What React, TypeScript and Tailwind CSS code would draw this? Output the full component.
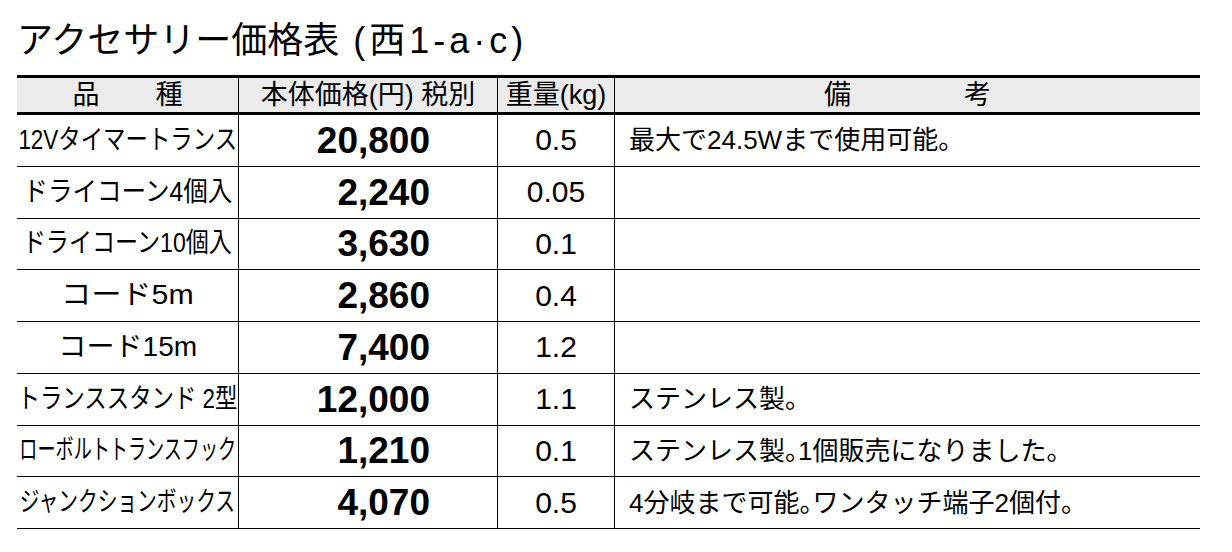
type Item = {
  name: string;
  fit: string;
  price: string;
  weight: string;
  note: string;
};

const items: Item[] = [
  { name: "12Vタイマートランス", fit: "scale-x-[0.83]", price: "20,800", weight: "0.5", note: "最大で24.5Wまで使用可能。" },
  { name: "ドライコーン4個入", fit: "scale-x-[0.91]", price: "2,240", weight: "0.05", note: "" },
  { name: "ドライコーン10個入", fit: "scale-x-[0.855]", price: "3,630", weight: "0.1", note: "" },
  { name: "コード5m", fit: "scale-x-[1.12]", price: "2,860", weight: "0.4", note: "" },
  { name: "コード15m", fit: "scale-x-[1.04]", price: "7,400", weight: "1.2", note: "" },
  { name: "トランススタンド 2型", fit: "scale-x-[0.83]", price: "12,000", weight: "1.1", note: "ステンレス製。" },
  { name: "ローボルトトランスフック", fit: "scale-x-[0.67]", price: "1,210", weight: "0.1", note: "ステンレス製。1個販売になりました。" },
  { name: "ジャンクションボックス", fit: "scale-x-[0.73]", price: "4,070", weight: "0.5", note: "4分岐まで可能。ワンタッチ端子2個付。" },
];

const row = "grid grid-cols-[221px_259px_117px_586px]";

// 句点は半角幅で組む
function Note({ text }: { text: string }) {
  const parts = text.split("。");
  return (
    <>
      {parts.map((p, i) => (
        <span key={i}>
          {p}
          {i < parts.length - 1 && <span className="[font-feature-settings:'halt']">。</span>}
        </span>
      ))}
    </>
  );
}

export default function App() {
  return (
    <div className="w-[1232px] h-[552px] bg-white text-black font-['Liberation_Sans','Noto_Sans_CJK_JP',sans-serif] pl-[17px]">
      {/* タイトル */}
      <div className="h-[75px] pt-[23px] text-[36px] leading-[36px] whitespace-nowrap">
        アクセサリー価格表 <span className="ml-[4px] tracking-[4px]">(西1-a·c)</span>
      </div>

      <div className="w-[1183px] flex flex-col">
        {/* 見出し */}
        <div className={`${row} h-[40px] bg-[#ebebeb] border-y-[3px] border-black text-[27px] leading-none`}>
          <div className="flex items-center justify-center gap-[56px]">
            <span>品</span>
            <span>種</span>
          </div>
          <div className="flex items-center justify-center border-l border-black whitespace-nowrap">
            本体価格(円) 税別
          </div>
          <div className="flex items-center justify-center border-l border-black whitespace-nowrap">
            重量(kg)
          </div>
          <div className="flex items-center justify-center gap-[113px] border-l border-black">
            <span>備</span>
            <span>考</span>
          </div>
        </div>

        {items.map((it) => (
          <div key={it.name} className={`${row} h-[51.75px] border-b border-black`}>
            <div className="flex items-center justify-center overflow-visible">
              <span className={`inline-block shrink-0 whitespace-nowrap text-[27px] leading-none origin-center ${it.fit}`}>
                {it.name}
              </span>
            </div>
            <div className="flex items-center justify-end pr-[67px] border-l border-black font-bold text-[37px] leading-none">
              {it.price}
            </div>
            <div className="flex items-center justify-center border-l border-black text-[30px] leading-none">
              {it.weight}
            </div>
            <div className="flex items-center pl-[14px] border-l border-black text-[26px] leading-none whitespace-nowrap">
              <Note text={it.note} />
            </div>
          </div>
        ))}
      </div>
    </div>
  );
}
